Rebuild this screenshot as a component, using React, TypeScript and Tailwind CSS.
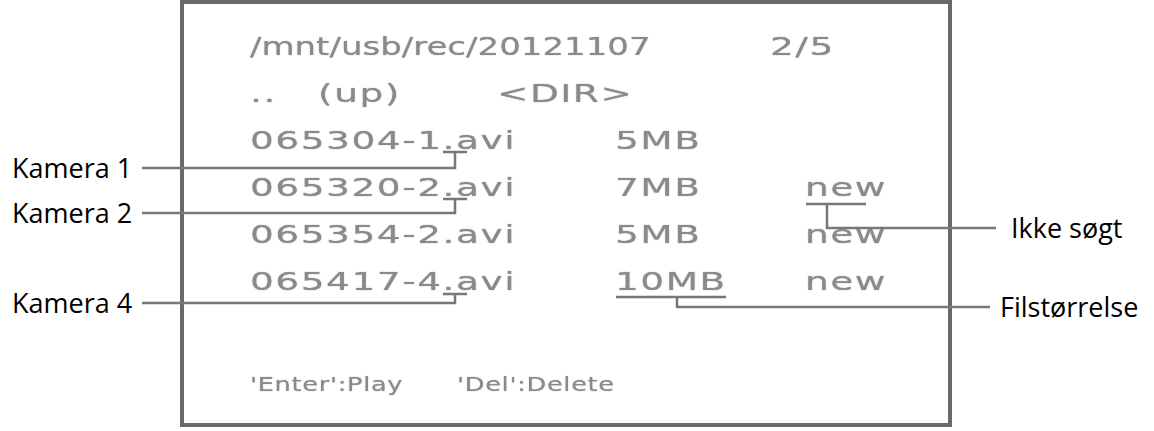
import React from "react";

const screen = "font-['DejaVu_Sans',sans-serif] text-[#8a8a8a] text-[25px] leading-[47px] [text-shadow:0_0_1px_#9a9a9a]";
const label = "absolute font-['Open_Sans',sans-serif] text-[27px] leading-[32px] text-black";

/** Extended-looking screen text: stretched horizontally like the DVR's square font. */
function S({ children, className = "scale-x-[1.5] tracking-[1px]" }: { children: React.ReactNode; className?: string }) {
  return <span className={`inline-block origin-left whitespace-nowrap ${className}`}>{children}</span>;
}

const files = [
  { name: "065304-1.avi", size: "5MB", flag: "" },
  { name: "065320-2.avi", size: "7MB", flag: "new" },
  { name: "065354-2.avi", size: "5MB", flag: "new" },
  { name: "065417-4.avi", size: "10MB", flag: "new" },
];

export default function App() {
  return (
    <div className="relative h-[431px] w-[1154px] overflow-hidden bg-white">
      {/* DVR file list screen */}
      <div className="ml-[180px] flex h-[427px] w-[772px] flex-col border-[4px] border-[#6a6a6a] pl-[66px] pt-[19px] blur-[0.3px]">
        <div className={`${screen} flex h-[47px]`}>
          <div className="w-[520px]">
            <S className="scale-x-[1.36]">/mnt/usb/rec/20121107</S>
          </div>
          <S>2/5</S>
        </div>
        <div className={`${screen} flex h-[47px]`}>
          <div className="w-[68px]">
            <S>..</S>
          </div>
          <div className="w-[179px]">
            <S>(up)</S>
          </div>
          <S>&lt;DIR&gt;</S>
        </div>
        {files.map((f) => (
          <div key={f.name} className={`${screen} flex h-[47px]`}>
            <div className="w-[365px]">
              <S>{f.name}</S>
            </div>
            <div className="w-[190px]">
              <S>{f.size}</S>
            </div>
            <S>{f.flag}</S>
          </div>
        ))}
        <div className="mt-[56px] flex h-[47px] font-['DejaVu_Sans',sans-serif] text-[19px] leading-[47px] text-[#8a8a8a] [text-shadow:0_0_1px_#9a9a9a]">
          <div className="w-[207px]">
            <S className="scale-x-[1.35] tracking-[0.5px]">'Enter':Play</S>
          </div>
          <S className="scale-x-[1.35] tracking-[0.5px]">'Del':Delete</S>
        </div>
      </div>

      {/* callout leader lines */}
      <svg className="pointer-events-none absolute inset-0" width="1154" height="431" viewBox="0 0 1154 431" fill="none">
        <g stroke="#777" strokeWidth="2.5">
          <path d="M142 168 H455 V152 M443 152 H467" />
          <path d="M142 213 H455 V199 M443 199 H467" />
          <path d="M142 303 H455 V294 M443 294 H467" />
          <path d="M806 204 H866 M827 204 V228 H996" />
          <path d="M616 297 H726 M677 297 V307 H990" />
        </g>
      </svg>

      <div className={`${label} left-[12px] top-[152px]`}>Kamera 1</div>
      <div className={`${label} left-[12px] top-[197px]`}>Kamera 2</div>
      <div className={`${label} left-[12px] top-[287px]`}>Kamera 4</div>
      <div className={`${label} left-[1011px] top-[212px]`}>Ikke søgt</div>
      <div className={`${label} left-[1000px] top-[291px]`}>Filstørrelse</div>
    </div>
  );
}
